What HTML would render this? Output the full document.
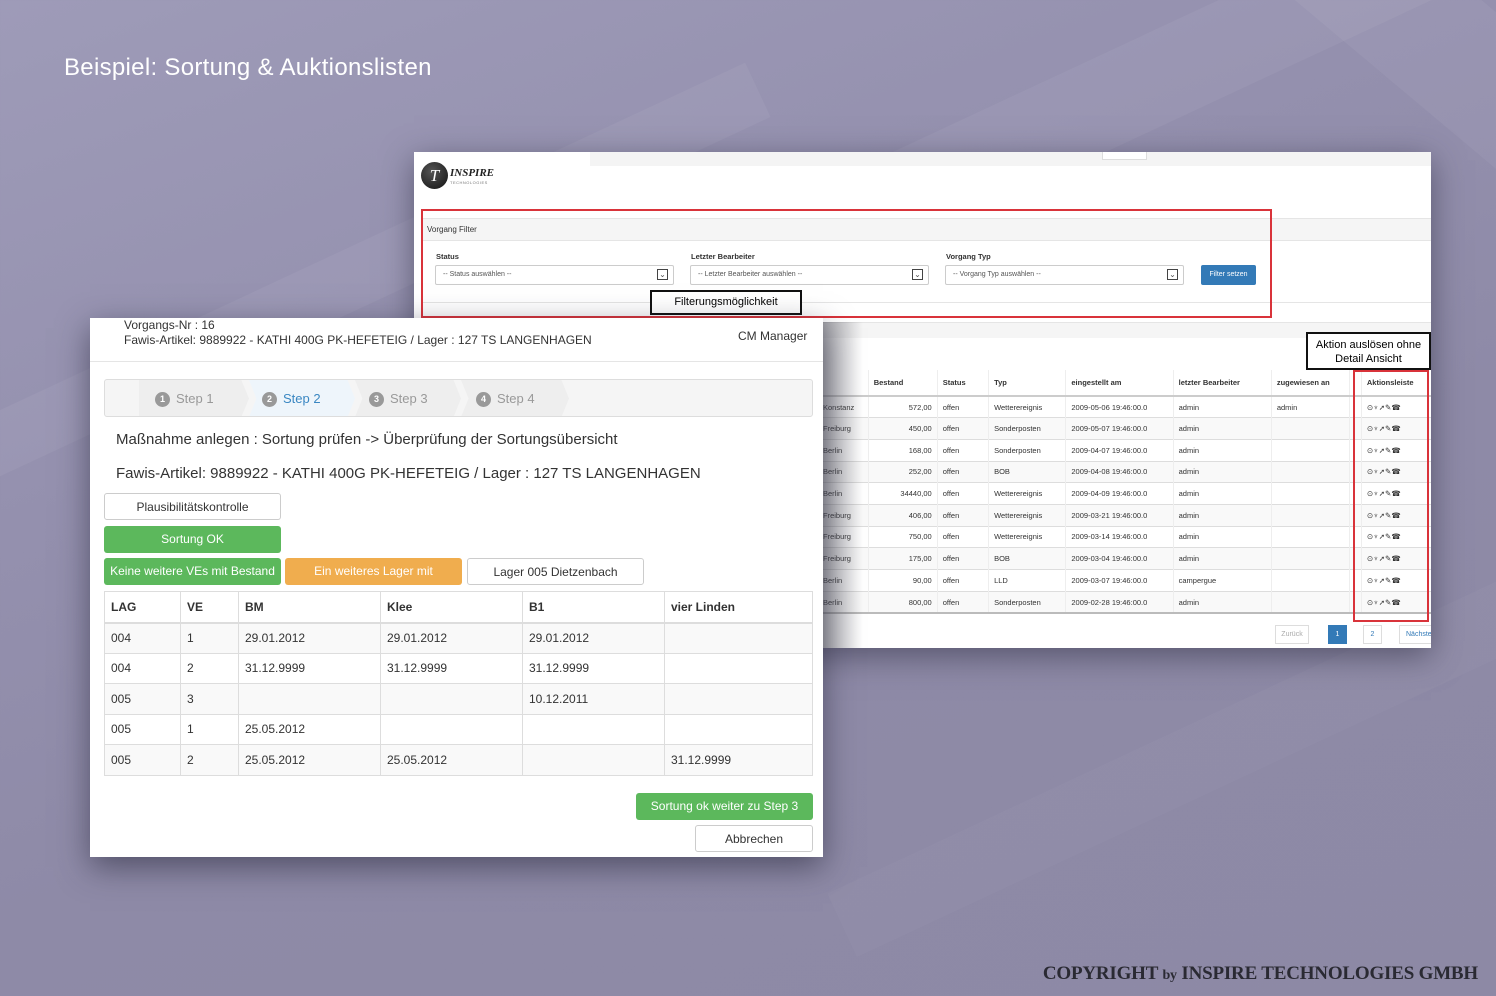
<!DOCTYPE html>
<html><head><meta charset="utf-8"><style>
*{box-sizing:border-box;margin:0;padding:0}
body{width:1496px;height:996px;overflow:hidden;position:relative;font-family:"Liberation Sans",sans-serif;
background:linear-gradient(160deg,#9e9bb8 0%,#9490ae 35%,#8e8aa7 60%,#8d89a5 100%);}
.streak{position:absolute;background:rgba(255,255,255,0.05);transform:rotate(-25deg)}
.abs{position:absolute}
#title{left:64px;top:54px;color:#fff;font-size:24px;letter-spacing:.3px}
#copy{right:18px;top:963px;font-family:"Liberation Serif",serif;font-weight:bold;color:#2a2a33;font-size:19px;letter-spacing:-0.2px}
#rp{left:414px;top:152px;width:1017px;height:496px;background:#fff;box-shadow:0 8px 30px rgba(40,40,60,.55);overflow:hidden;font-size:8px;color:#333}
#lp{left:90px;top:318px;width:733px;height:539px;background:#fff;box-shadow:0 10px 30px rgba(40,40,60,.6);color:#333}
.sel{position:absolute;height:20px;border:1px solid #ccc;border-radius:2px;font-size:7px;color:#555;padding:5px 7px;background:#fff}
.sel i{position:absolute;right:5px;top:3px;width:11px;height:11px;border:1px solid #444;font-style:normal;font-size:8px;line-height:9px;text-align:center}
.lbl{position:absolute;font-weight:bold;font-size:7.5px}
table{border-collapse:collapse}
#rt{position:absolute;left:403px;top:218px;font-size:7.5px}
#rt td{height:21.7px;border-top:1px solid #ddd;border-left:1px solid #eee;padding:0 5px;white-space:nowrap}
#rt th{height:26px;border-bottom:2px solid #ccc;border-left:1px solid #eee;text-align:left;padding:0 5px;font-size:7.5px}
#rt tr:nth-child(odd) td{background:#f9f9f9}
.r{text-align:right}
#lt{position:absolute;left:14px;top:273px;width:709px;font-size:12px}
#lt th,#lt td{border:1px solid #ddd;text-align:left;padding:0 6px}
#lt th{height:31px;border-bottom:2px solid #ddd;font-weight:bold}
#lt td{height:30.5px}
#lt tr:nth-child(even) td{background:#f9f9f9}
.btn{position:absolute;height:27px;border-radius:3px;font-size:12px;text-align:center;line-height:27px}
.w{border:1px solid #ccc;background:#fff;color:#333}
.g{background:#5cb85c;color:#fff}
.o{background:#f0ad4e;color:#fff}
.step{position:absolute;top:0;height:37px;line-height:37px;font-size:13px;color:#999}
.step b{display:inline-block;width:15px;height:15px;border-radius:50%;background:#999;color:#fff;font-size:9px;line-height:15px;text-align:center;margin-right:6px;vertical-align:1px}
</style></head><body>
<div class="streak" style="left:-100px;top:250px;width:900px;height:60px"></div>
<div class="streak" style="left:500px;top:60px;width:1200px;height:90px"></div>
<div class="streak" style="left:1100px;top:-50px;width:600px;height:120px;transform:rotate(40deg)"></div>
<div class="streak" style="left:800px;top:700px;width:900px;height:70px;background:rgba(255,255,255,.03)"></div>
<div id="title" class="abs">Beispiel: Sortung &amp; Auktionslisten</div>

<div id="rp" class="abs">
 <div class="abs" style="left:176px;top:0;width:841px;height:14px;background:#f4f4f4"></div>
 <div class="abs" style="left:688px;top:0;width:45px;height:8px;border:1px solid #ddd;border-top:none;background:#fff"></div>
 <div class="abs" style="left:7px;top:10px;width:27px;height:27px;border-radius:50%;background:radial-gradient(circle at 40% 35%,#555,#111);color:#fff;font-family:'Liberation Serif',serif;font-style:italic;font-size:17px;text-align:center;line-height:27px">T</div>
 <div class="abs" style="left:36px;top:15px;font-family:'Liberation Serif',serif;font-style:italic;font-weight:bold;font-size:11px;color:#222">INSPIRE</div>
 <div class="abs" style="left:36px;top:28px;font-size:4px;color:#777;letter-spacing:.5px">TECHNOLOGIES</div>
 <div class="abs" style="left:8px;top:66px;width:1009px;height:23px;background:#f5f5f5;border-top:1px solid #e5e5e5;border-bottom:1px solid #e5e5e5"></div>
 <div class="abs" style="left:13px;top:73px;font-size:8px">Vorgang Filter</div>
 <div class="lbl" style="left:22px;top:100px">Status</div>
 <div class="lbl" style="left:277px;top:100px">Letzter Bearbeiter</div>
 <div class="lbl" style="left:532px;top:100px">Vorgang Typ</div>
 <div class="sel" style="left:21px;top:113px;width:239px">-- Status auswählen --<i>⌄</i></div>
 <div class="sel" style="left:276px;top:113px;width:239px">-- Letzter Bearbeiter auswählen --<i>⌄</i></div>
 <div class="sel" style="left:531px;top:113px;width:239px">-- Vorgang Typ auswählen --<i>⌄</i></div>
 <div class="abs" style="left:787px;top:113px;width:55px;height:20px;background:#337ab7;border-radius:2px;color:#fff;font-size:7px;text-align:center;line-height:20px">Filter setzen</div>
 <div class="abs" style="left:8px;top:150px;width:1009px;height:1px;background:#e5e5e5"></div>
 <div class="abs" style="left:7px;top:57px;width:851px;height:109px;border:2px solid #d9333a"></div>
 <div class="abs" style="left:236px;top:138px;width:152px;height:25px;border:2px solid #111;background:#fff;font-size:11px;text-align:center;line-height:21px;color:#000">Filterungsmöglichkeit</div>
 <div class="abs" style="left:8px;top:170px;width:1009px;height:16px;background:#f5f5f5;border-top:1px solid #e5e5e5"></div>
 <table id="rt">
  <tr><th style="width:51px"></th><th style="width:70px">Bestand</th><th style="width:52px">Status</th><th style="width:78px">Typ</th><th style="width:108px">eingestellt am</th><th style="width:100px">letzter Bearbeiter</th><th style="width:79px">zugewiesen an</th><th style="width:12px"></th><th style="width:70px">Aktionsleiste</th></tr>
  <tr><td>Konstanz</td><td class="r">572,00</td><td>offen</td><td>Wetterereignis</td><td>2009-05-06 19:46:00.0</td><td>admin</td><td>admin</td><td></td><td>⊙♆➚✎☎</td></tr>
  <tr><td>Freiburg</td><td class="r">450,00</td><td>offen</td><td>Sonderposten</td><td>2009-05-07 19:46:00.0</td><td>admin</td><td></td><td></td><td>⊙♆➚✎☎</td></tr>
  <tr><td>Berlin</td><td class="r">168,00</td><td>offen</td><td>Sonderposten</td><td>2009-04-07 19:46:00.0</td><td>admin</td><td></td><td></td><td>⊙♆➚✎☎</td></tr>
  <tr><td>Berlin</td><td class="r">252,00</td><td>offen</td><td>BOB</td><td>2009-04-08 19:46:00.0</td><td>admin</td><td></td><td></td><td>⊙♆➚✎☎</td></tr>
  <tr><td>Berlin</td><td class="r">34440,00</td><td>offen</td><td>Wetterereignis</td><td>2009-04-09 19:46:00.0</td><td>admin</td><td></td><td></td><td>⊙♆➚✎☎</td></tr>
  <tr><td>Freiburg</td><td class="r">406,00</td><td>offen</td><td>Wetterereignis</td><td>2009-03-21 19:46:00.0</td><td>admin</td><td></td><td></td><td>⊙♆➚✎☎</td></tr>
  <tr><td>Freiburg</td><td class="r">750,00</td><td>offen</td><td>Wetterereignis</td><td>2009-03-14 19:46:00.0</td><td>admin</td><td></td><td></td><td>⊙♆➚✎☎</td></tr>
  <tr><td>Freiburg</td><td class="r">175,00</td><td>offen</td><td>BOB</td><td>2009-03-04 19:46:00.0</td><td>admin</td><td></td><td></td><td>⊙♆➚✎☎</td></tr>
  <tr><td>Berlin</td><td class="r">90,00</td><td>offen</td><td>LLD</td><td>2009-03-07 19:46:00.0</td><td>campergue</td><td></td><td></td><td>⊙♆➚✎☎</td></tr>
  <tr><td>Berlin</td><td class="r">800,00</td><td>offen</td><td>Sonderposten</td><td>2009-02-28 19:46:00.0</td><td>admin</td><td></td><td></td><td>⊙♆➚✎☎</td></tr>
 </table>
 <div class="abs" style="left:409px;top:460px;width:608px;height:2px;background:#bbb"></div>
 <div class="abs" style="left:939px;top:218px;width:76px;height:252px;border:2px solid #d9333a"></div>
 <div class="abs" style="left:892px;top:180px;width:125px;height:38px;border:2px solid #111;background:#fff;color:#000;font-size:11px;text-align:center;line-height:14px;padding-top:4px">Aktion auslösen ohne<br>Detail Ansicht</div>
 <div class="abs" style="left:861px;top:473px;width:34px;height:19px;border:1px solid #ddd;color:#aaa;font-size:7px;text-align:center;line-height:17px">Zurück</div>
 <div class="abs" style="left:914px;top:473px;width:19px;height:19px;background:#337ab7;color:#fff;font-size:7px;text-align:center;line-height:19px">1</div>
 <div class="abs" style="left:949px;top:473px;width:19px;height:19px;border:1px solid #ddd;color:#337ab7;font-size:7px;text-align:center;line-height:17px">2</div>
 <div class="abs" style="left:985px;top:473px;width:40px;height:19px;border:1px solid #ddd;color:#337ab7;font-size:7px;line-height:17px;padding-left:6px">Nächste</div>
 <div class="abs" style="left:409px;top:170px;width:40px;height:326px;background:linear-gradient(90deg,rgba(80,80,90,.5),rgba(255,255,255,0))"></div>
</div>

<div id="lp" class="abs">
 <div class="abs" style="left:34px;top:0;font-size:12px">Vorgangs-Nr : 16</div>
 <div class="abs" style="left:34px;top:15px;font-size:12px">Fawis-Artikel: 9889922 - KATHI 400G PK-HEFETEIG / Lager : 127 TS LANGENHAGEN</div>
 <div class="abs" style="left:648px;top:11px;font-size:12px">CM Manager</div>
 <div class="abs" style="left:0;top:43px;width:733px;height:1px;background:#e5e5e5"></div>
 <div class="abs" style="left:14px;top:61px;width:709px;height:38px;border:1px solid #ddd;border-radius:3px;background:#f5f5f5;overflow:hidden">
  <div class="abs" style="left:34px;top:0;width:110px;height:37px;background:#eee;clip-path:polygon(0 0,93% 0,100% 50%,93% 100%,0 100%)"></div>
  <div class="abs" style="left:144px;top:0;width:106px;height:37px;background:#eef5fb;clip-path:polygon(0 0,93% 0,100% 50%,93% 100%,0 100%,7% 50%)"></div>
  <div class="abs" style="left:250px;top:0;width:106px;height:37px;background:#eee;clip-path:polygon(0 0,93% 0,100% 50%,93% 100%,0 100%,7% 50%)"></div>
  <div class="abs" style="left:356px;top:0;width:108px;height:37px;background:#eee;clip-path:polygon(0 0,93% 0,100% 50%,93% 100%,0 100%,7% 50%)"></div>
  <div class="step" style="left:50px"><b>1</b>Step 1</div>
  <div class="step" style="left:157px;color:#3a87c2"><b>2</b>Step 2</div>
  <div class="step" style="left:264px"><b>3</b>Step 3</div>
  <div class="step" style="left:371px"><b>4</b>Step 4</div>
 </div>
 <div class="abs" style="left:26px;top:113px;font-size:15px">Maßnahme anlegen : Sortung prüfen -&gt; Überprüfung der Sortungsübersicht</div>
 <div class="abs" style="left:26px;top:147px;font-size:15px">Fawis-Artikel: 9889922 - KATHI 400G PK-HEFETEIG / Lager : 127 TS LANGENHAGEN</div>
 <div class="btn w" style="left:14px;top:175px;width:177px">Plausibilitätskontrolle</div>
 <div class="btn g" style="left:14px;top:208px;width:177px">Sortung OK</div>
 <div class="btn g" style="left:14px;top:240px;width:177px">Keine weitere VEs mit Bestand</div>
 <div class="btn o" style="left:195px;top:240px;width:177px">Ein weiteres Lager mit</div>
 <div class="btn w" style="left:377px;top:240px;width:177px">Lager 005 Dietzenbach</div>
 <table id="lt">
  <tr><th style="width:76px">LAG</th><th style="width:58px">VE</th><th style="width:142px">BM</th><th style="width:142px">Klee</th><th style="width:142px">B1</th><th>vier Linden</th></tr>
  <tr><td>004</td><td>1</td><td>29.01.2012</td><td>29.01.2012</td><td>29.01.2012</td><td></td></tr>
  <tr><td>004</td><td>2</td><td>31.12.9999</td><td>31.12.9999</td><td>31.12.9999</td><td></td></tr>
  <tr><td>005</td><td>3</td><td></td><td></td><td>10.12.2011</td><td></td></tr>
  <tr><td>005</td><td>1</td><td>25.05.2012</td><td></td><td></td><td></td></tr>
  <tr><td>005</td><td>2</td><td>25.05.2012</td><td>25.05.2012</td><td></td><td>31.12.9999</td></tr>
 </table>
 <div class="btn g" style="left:546px;top:475px;width:177px">Sortung ok weiter zu Step 3</div>
 <div class="btn w" style="left:605px;top:507px;width:118px">Abbrechen</div>
</div>
<div id="copy" class="abs">COPYRIGHT <span style="font-size:14px">by</span> INSPIRE TECHNOLOGIES GMBH</div>
</body></html>
